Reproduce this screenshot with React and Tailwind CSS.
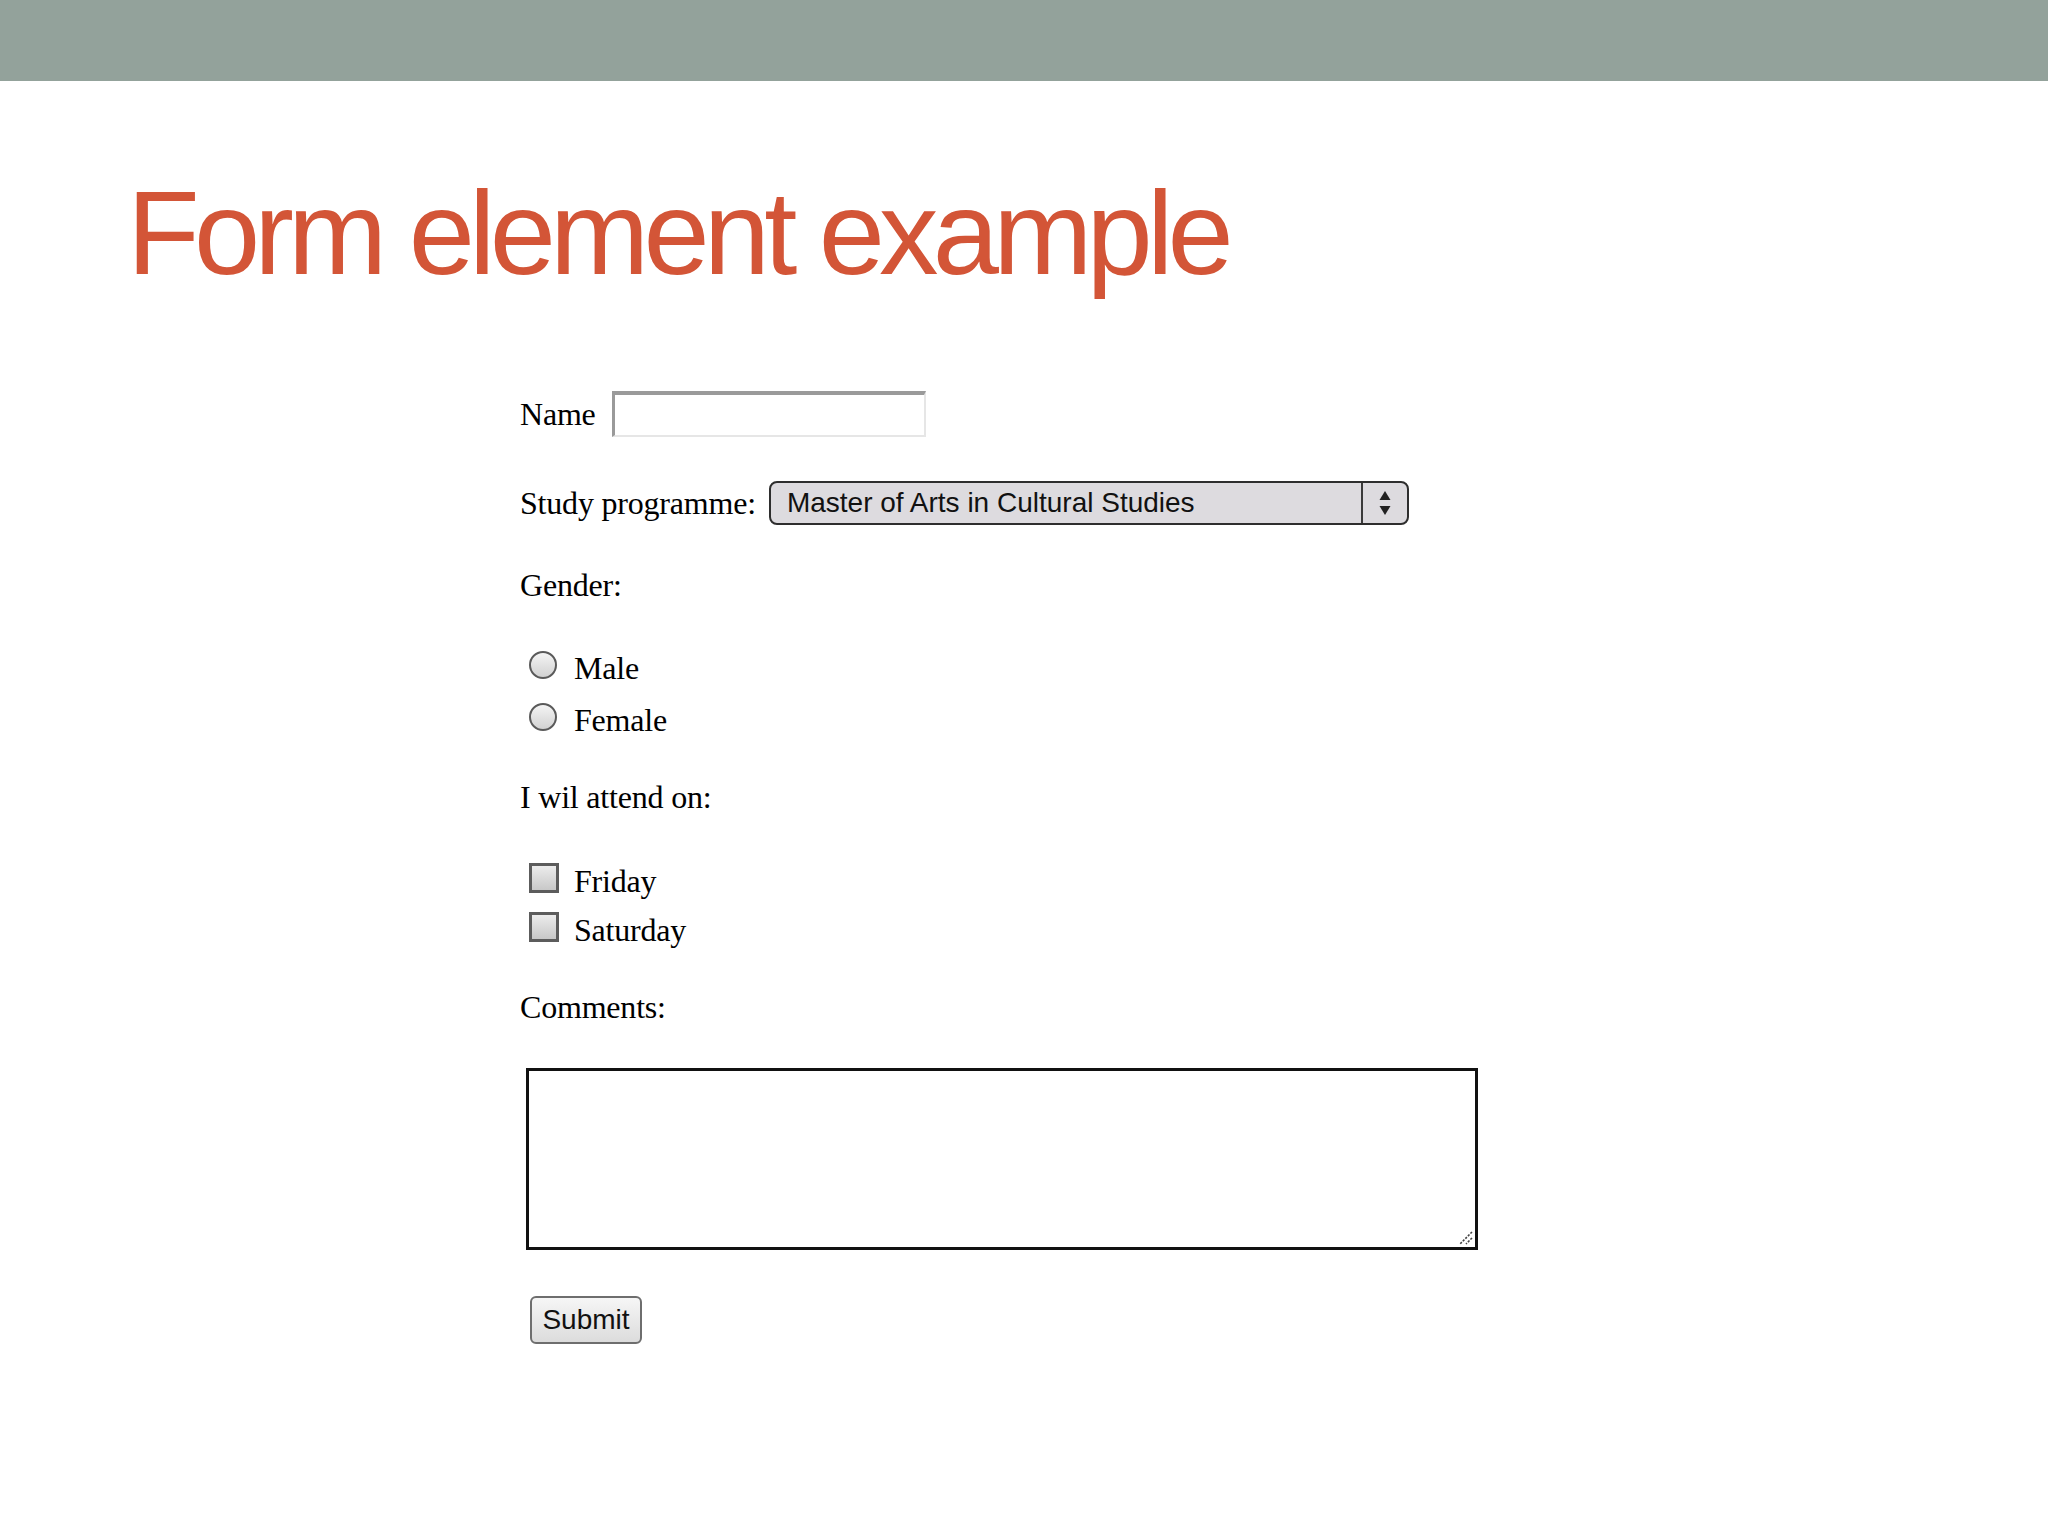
import React from "react";

const serif = "font-['Liberation_Serif','Times_New_Roman',serif]";
const sans = "font-['Liberation_Sans',Arial,sans-serif]";

function Radio() {
  return (
    <span className="mt-[3px] block h-[28px] w-[28px] shrink-0 rounded-full border-[2px] border-[#5a5a5a] bg-gradient-to-b from-[#f4f4f4] to-[#d2d2d2]" />
  );
}

function Checkbox() {
  return (
    <span className="mt-[2px] block h-[30px] w-[30px] shrink-0 border-[3px] border-[#5c5c5c] bg-gradient-to-b from-[#ececec] to-[#c8c8c8]" />
  );
}

export default function App() {
  return (
    <div className="min-h-[1536px] w-[2048px] bg-white">
      <div className="h-[81px] w-full bg-[#93a29b]" />
      <h1
        className={`${sans} ml-[127px] mt-[92px] text-[119px] leading-none tracking-[-5.8px] text-[#d35537]`}
      >
        Form element example
      </h1>

      <div className={`${serif} ml-[520px] mt-[99px] flex flex-col text-[32px] tracking-[-0.2px] text-[#000]`}>
        <div className="flex h-[46px] items-center">
          <span className="leading-[46px]">Name</span>
          <span className="ml-[16px] block h-[46px] w-[314px] border-b-[2px] border-l-[3px] border-r-[2px] border-t-[4px] border-b-[#e6e6e6] border-l-[#9a9a9a] border-r-[#e6e6e6] border-t-[#9a9a9a] bg-white" />
        </div>

        <div className="mt-[44px] flex h-[44px] items-center">
          <span className="leading-[44px]">Study programme:</span>
          <div className="ml-[13px] flex h-[44px] w-[640px] items-stretch overflow-hidden rounded-[8px] border-[2px] border-[#2e2e2e] bg-[#dddbdf] tracking-normal">
            <span className={`${sans} flex-1 pl-[16px] text-[28px] leading-[40px] text-[#111]`}>
              Master of Arts in Cultural Studies
            </span>
            <span className="flex w-[46px] items-center justify-center border-l-[2px] border-[#3a3a3a]">
              <svg width="14" height="28" viewBox="0 0 14 28">
                <path d="M7 2 L12.5 11 L1.5 11 Z" fill="#222" />
                <path d="M7 26 L12.5 17 L1.5 17 Z" fill="#222" />
              </svg>
            </span>
          </div>
        </div>

        <div className="mt-[40px] leading-[40px]">Gender:</div>

        <div className="ml-[9px] mt-[43px] flex h-[40px] items-start">
          <Radio />
          <span className="ml-[17px] leading-[40px]">Male</span>
        </div>
        <div className="ml-[9px] mt-[12px] flex h-[40px] items-start">
          <Radio />
          <span className="ml-[17px] leading-[40px]">Female</span>
        </div>

        <div className="mt-[37px] leading-[40px]">I wil attend on:</div>

        <div className="ml-[9px] mt-[44px] flex h-[40px] items-start">
          <Checkbox />
          <span className="ml-[15px] leading-[40px]">Friday</span>
        </div>
        <div className="ml-[9px] mt-[9px] flex h-[40px] items-start">
          <Checkbox />
          <span className="ml-[15px] leading-[40px]">Saturday</span>
        </div>

        <div className="mt-[37px] leading-[40px]">Comments:</div>

        <div className="relative ml-[6px] mt-[41px] h-[182px] w-[952px] border-[3px] border-[#111] bg-white">
          <svg className="absolute bottom-[2px] right-[2px]" width="16" height="16" viewBox="0 0 16 16">
            <path d="M15 3 L3 15 M15 9 L9 15" stroke="#444" strokeWidth="1.6" strokeDasharray="2.2 1.4" />
          </svg>
        </div>

        <div className="mt-[46px]">
          <button
            className={`${sans} ml-[10px] flex h-[48px] w-[112px] items-center justify-center rounded-[6px] border-[2px] border-[#6e6e6e] bg-gradient-to-b from-[#f6f6f6] to-[#dcdcdc] text-[28px] tracking-normal text-[#111]`}
          >
            Submit
          </button>
        </div>
      </div>
    </div>
  );
}
